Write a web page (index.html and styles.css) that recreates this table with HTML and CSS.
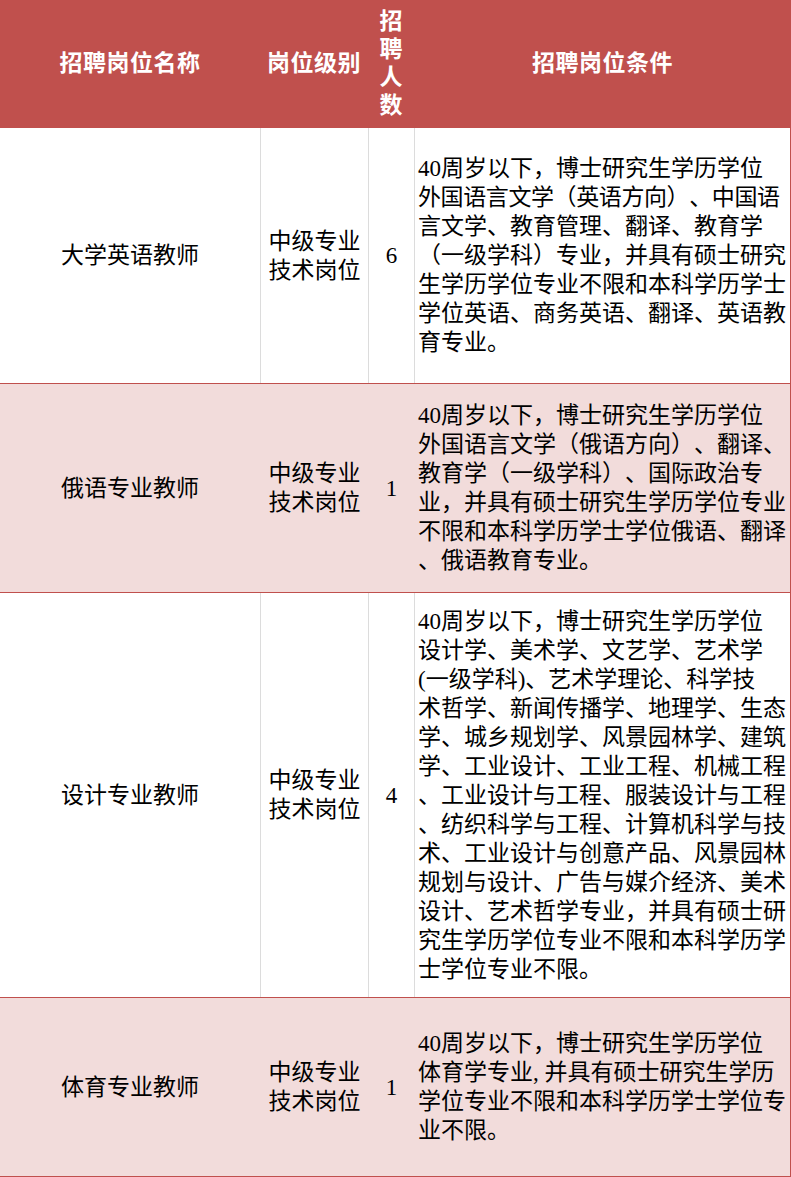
FILE: index.html
```html
<!DOCTYPE html>
<html lang="zh-CN">
<head>
<meta charset="utf-8">
<title>招聘岗位</title>
<link rel="stylesheet" href="styles.css">
</head>
<body>
<div class="table">
  <div class="row head">
    <div class="cell c1">招聘岗位名称</div>
    <div class="cell c2">岗位级别</div>
    <div class="cell c3">招聘人数</div>
    <div class="cell c4">招聘岗位条件</div>
  </div>

  <div class="row white r1">
    <div class="cell c1">大学英语教师</div>
    <div class="cell c2">中级专业<br>技术岗位</div>
    <div class="cell c3">6</div>
    <div class="cell c4">
      <span class="ln">40周岁以下，博士研究生学历学位</span>
      <span class="ln tight">外国语言文学（英语方向）、中国语</span>
      <span class="ln">言文学、教育管理、翻译、教育学</span>
      <span class="ln">（一级学科）专业，并具有硕士研究</span>
      <span class="ln">生学历学位专业不限和本科学历学士</span>
      <span class="ln">学位英语、商务英语、翻译、英语教</span>
      <span class="ln">育专业。</span>
    </div>
  </div>

  <div class="row pink r2">
    <div class="cell c1">俄语专业教师</div>
    <div class="cell c2">中级专业<br>技术岗位</div>
    <div class="cell c3">1</div>
    <div class="cell c4">
      <span class="ln">40周岁以下，博士研究生学历学位</span>
      <span class="ln">外国语言文学（俄语方向）、翻译、</span>
      <span class="ln">教育学（一级学科）、国际政治专</span>
      <span class="ln">业，并具有硕士研究生学历学位专业</span>
      <span class="ln">不限和本科学历学士学位俄语、翻译</span>
      <span class="ln">、俄语教育专业。</span>
    </div>
  </div>

  <div class="row white r3">
    <div class="cell c1">设计专业教师</div>
    <div class="cell c2">中级专业<br>技术岗位</div>
    <div class="cell c3">4</div>
    <div class="cell c4">
      <span class="ln">40周岁以下，博士研究生学历学位</span>
      <span class="ln">设计学、美术学、文艺学、艺术学</span>
      <span class="ln">(一级学科)、艺术学理论、科学技</span>
      <span class="ln">术哲学、新闻传播学、地理学、生态</span>
      <span class="ln">学、城乡规划学、风景园林学、建筑</span>
      <span class="ln">学、工业设计、工业工程、机械工程</span>
      <span class="ln">、工业设计与工程、服装设计与工程</span>
      <span class="ln">、纺织科学与工程、计算机科学与技</span>
      <span class="ln">术、工业设计与创意产品、风景园林</span>
      <span class="ln">规划与设计、广告与媒介经济、美术</span>
      <span class="ln">设计、艺术哲学专业，并具有硕士研</span>
      <span class="ln">究生学历学位专业不限和本科学历学</span>
      <span class="ln">士学位专业不限。</span>
    </div>
  </div>

  <div class="row pink r4">
    <div class="cell c1">体育专业教师</div>
    <div class="cell c2">中级专业<br>技术岗位</div>
    <div class="cell c3">1</div>
    <div class="cell c4">
      <span class="ln">40周岁以下，博士研究生学历学位</span>
      <span class="ln">体育学专业, 并具有硕士研究生学历</span>
      <span class="ln">学位专业不限和本科学历学士学位专</span>
      <span class="ln">业不限。</span>
    </div>
  </div>
</div>
</body>
</html>
```

FILE: styles.css
```css
* { box-sizing: border-box; }

html, body {
  margin: 0;
  padding: 0;
  background: #ffffff;
}

body {
  font-family: "Liberation Serif", "Noto Sans CJK SC", serif;
  color: #000000;
  width: 791px;
  text-spacing-trim: space-all;
}

.table {
  display: flex;
  flex-direction: column;
  width: 791px;
}

.row {
  display: grid;
  grid-template-columns: 260px 108px 46px 1fr;
  width: 791px;
}

.head {
  height: 128px;
  background: #c0504d;
  color: #ffffff;
  font-weight: bold;
  font-size: 23px;
  line-height: 28px;
}

.white, .pink {
  border-right: 1px solid #c0504d;
  border-bottom: 1px solid #c0504d;
  font-size: 23px;
  line-height: 29px;
}

.white { background: #ffffff; }
.pink { background: #f2dcdb; }

.r1 { height: 256px; }
.r2 { height: 209px; }
.r3 { height: 405px; }
.r4 { height: 179px; }

.cell {
  display: flex;
  align-items: center;
  justify-content: center;
  text-align: center;
}

.white .c2, .white .c3, .white .c4 {
  border-left: 1px solid #dcdcdc;
}

.pink .c2, .pink .c3, .pink .c4 {
  border-left: 1px solid transparent;
}

.head .c3 {
  padding: 0 4px;
}

.head .c1, .head .c2, .head .c4 {
  letter-spacing: 0.5px;
}

.white .c4, .pink .c4 {
  flex-direction: column;
  align-items: flex-start;
  justify-content: center;
  text-align: left;
  padding-left: 3px;
}

.ln {
  display: block;
  white-space: nowrap;
}

.tight {
  letter-spacing: -0.4px;
}
```
